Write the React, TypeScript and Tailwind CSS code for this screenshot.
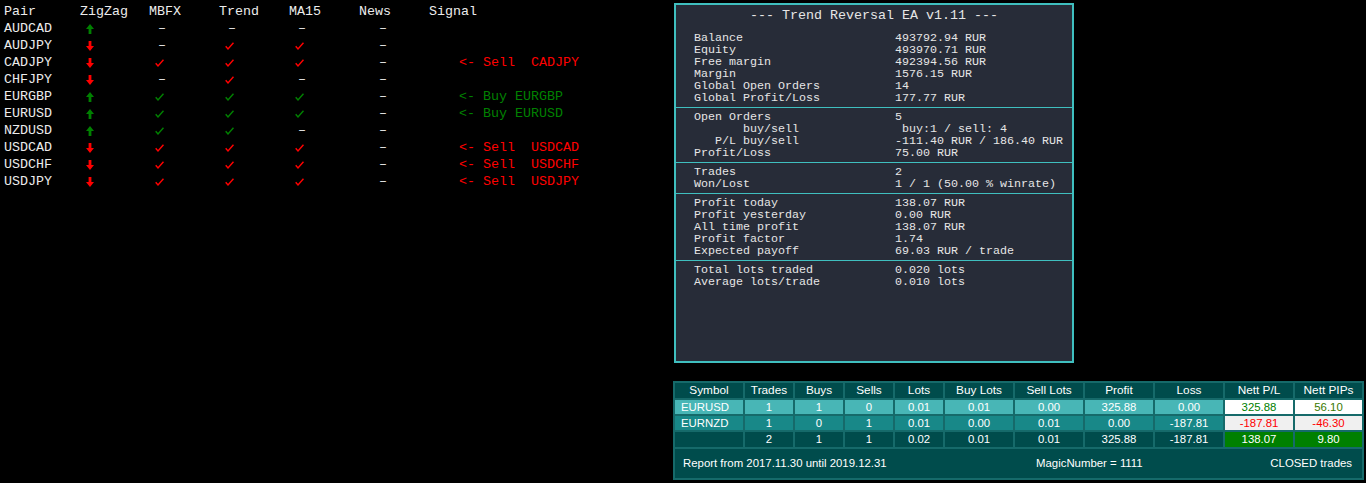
import React from "react";

type C = "u" | "d" | "-" | "r" | "g";

function Up() {
  return (
    <svg width="8" height="10" viewBox="0 0 8 10">
      <path d="M4 0 L8 5 L5.4 5 L5.4 10 L2.6 10 L2.6 5 L0 5 Z" fill="#008000" />
    </svg>
  );
}
function Down() {
  return (
    <svg width="8" height="10" viewBox="0 0 8 10">
      <path d="M4 10 L8 5 L5.4 5 L5.4 0 L2.6 0 L2.6 5 L0 5 Z" fill="#ff0000" />
    </svg>
  );
}
function Check({ c }: { c: string }) {
  return (
    <svg width="9" height="8" viewBox="0 0 9 8">
      <path d="M0.7 4.3 L3 6.9 L8.5 0.7" fill="none" stroke={c} strokeWidth="1.5" />
    </svg>
  );
}

function Cell({ v, w }: { v: C; w: string }) {
  if (v === "-")
    return <div className={`${w} pl-[9px] leading-[17px]`}>–</div>;
  return (
    <div className={`${w} pl-[6px] flex items-center`}>
      <Check c={v === "r" ? "#ff0000" : "#008000"} />
    </div>
  );
}

const rows: { p: string; z: "u" | "d"; m: C; t: C; a: C; s?: string; sc?: "r" | "g" }[] = [
  { p: "AUDCAD", z: "u", m: "-", t: "-", a: "-" },
  { p: "AUDJPY", z: "d", m: "-", t: "r", a: "r" },
  { p: "CADJPY", z: "d", m: "r", t: "r", a: "r", s: "<- Sell  CADJPY", sc: "r" },
  { p: "CHFJPY", z: "d", m: "-", t: "r", a: "-" },
  { p: "EURGBP", z: "u", m: "g", t: "g", a: "g", s: "<- Buy EURGBP", sc: "g" },
  { p: "EURUSD", z: "u", m: "g", t: "g", a: "g", s: "<- Buy EURUSD", sc: "g" },
  { p: "NZDUSD", z: "u", m: "g", t: "g", a: "-" },
  { p: "USDCAD", z: "d", m: "r", t: "r", a: "r", s: "<- Sell  USDCAD", sc: "r" },
  { p: "USDCHF", z: "d", m: "r", t: "r", a: "r", s: "<- Sell  USDCHF", sc: "r" },
  { p: "USDJPY", z: "d", m: "r", t: "r", a: "r", s: "<- Sell  USDJPY", sc: "r" },
];

const sections: [string, string][][] = [
  [
    ["Balance", "493792.94 RUR"],
    ["Equity", "493970.71 RUR"],
    ["Free margin", "492394.56 RUR"],
    ["Margin", "1576.15 RUR"],
    ["Global Open Orders", "14"],
    ["Global Profit/Loss", "177.77 RUR"],
  ],
  [
    ["Open Orders", "5"],
    ["       buy/sell", " buy:1 / sell: 4"],
    ["   P/L buy/sell", "-111.40 RUR / 186.40 RUR"],
    ["Profit/Loss", "75.00 RUR"],
  ],
  [
    ["Trades", "2"],
    ["Won/Lost", "1 / 1 (50.00 % winrate)"],
  ],
  [
    ["Profit today", "138.07 RUR"],
    ["Profit yesterday", "0.00 RUR"],
    ["All time profit", "138.07 RUR"],
    ["Profit factor", "1.74"],
    ["Expected payoff", "69.03 RUR / trade"],
  ],
  [
    ["Total lots traded", "0.020 lots"],
    ["Average lots/trade", "0.010 lots"],
  ],
];

const headers = ["Symbol", "Trades", "Buys", "Sells", "Lots", "Buy Lots", "Sell Lots", "Profit", "Loss", "Nett P/L", "Nett PIPs"];

export default function App() {
  return (
    <div className="w-[1366px] h-[483px] bg-black flex overflow-hidden">
      {/* left pair table */}
      <div className="w-[673px] shrink-0 pl-[4px] pt-[3px] font-['Liberation_Mono','Courier_New',monospace] text-[13.33px] text-[#ececec] whitespace-pre">
        <div className="flex h-[17px] leading-[17px]">
          <div className="w-[76px]">Pair</div>
          <div className="w-[69px]">ZigZag</div>
          <div className="w-[70px]">MBFX</div>
          <div className="w-[70px]">Trend</div>
          <div className="w-[70px]">MA15</div>
          <div className="w-[70px]">News</div>
          <div>Signal</div>
        </div>
        {rows.map((r) => (
          <div key={r.p} className="flex h-[17px] leading-[17px]">
            <div className="w-[76px]">{r.p}</div>
            <div className="w-[69px] pl-[6px] flex items-center">{r.z === "u" ? <Up /> : <Down />}</div>
            <Cell v={r.m} w="w-[70px]" />
            <Cell v={r.t} w="w-[70px]" />
            <Cell v={r.a} w="w-[70px]" />
            <div className="w-[70px] pl-[20px]">–</div>
            {r.s && (
              <div className={`pl-[30px] ${r.sc === "r" ? "text-[#ff0000]" : "text-[#008000]"}`}>{r.s}</div>
            )}
          </div>
        ))}
      </div>

      {/* right column */}
      <div className="flex flex-col">
        <div className="ml-[1px] mt-[3px] w-[400px] h-[360px] border-2 border-[#3fbfbf] bg-[#272c38] font-['Liberation_Mono','Courier_New',monospace] text-[#e6e6e6] whitespace-pre">
          <div className="pt-[3px] h-[19px] text-center text-[13.33px] leading-[16px]">--- Trend Reversal EA v1.11 ---</div>
          {sections.map((sec, i) => (
            <div
              key={i}
              className={`${i === 0 ? "pt-[8px]" : "pt-[3px] border-t border-[#3fbfbf]"} pb-[3px] pl-[18px] text-[11.67px] leading-[12px]`}
            >
              {sec.map(([a, b]) => (
                <div key={a} className="flex h-[12px]">
                  <div className="w-[201px]">{a}</div>
                  <div>{b}</div>
                </div>
              ))}
            </div>
          ))}
        </div>

        <div className="mt-[18px] w-[691px] p-[2px] bg-[#166a6a] font-['Liberation_Sans',Arial,sans-serif] text-[11.4px] text-white grid grid-cols-[68px_48px_48px_48px_48px_68px_68px_68px_68px_68px_67px] gap-[2px]">
          {headers.map((h) => (
            <div key={h} className="h-[15px] bg-[#004c4c] text-center leading-[15px] text-[11.8px]">
              {h}
            </div>
          ))}
          {/* row 1 */}
          <div className="h-[14px] bg-[#48b6b6] pl-[6px] leading-[14px]">EURUSD</div>
          {["1", "1", "0", "0.01", "0.01", "0.00", "325.88", "0.00"].map((v, i) => (
            <div key={i} className="h-[14px] bg-[#48b6b6] text-center leading-[14px]">{v}</div>
          ))}
          <div className="h-[14px] bg-white text-[#008000] text-center leading-[14px]">325.88</div>
          <div className="h-[14px] bg-white text-[#3a7a00] text-center leading-[14px]">56.10</div>
          {/* row 2 */}
          <div className="h-[14px] bg-[#188888] pl-[6px] leading-[14px]">EURNZD</div>
          {["1", "0", "1", "0.01", "0.00", "0.01", "0.00", "-187.81"].map((v, i) => (
            <div key={i} className="h-[14px] bg-[#188888] text-center leading-[14px]">{v}</div>
          ))}
          <div className="h-[14px] bg-[#f0f0f0] text-[#ff0000] text-center leading-[14px]">-187.81</div>
          <div className="h-[14px] bg-[#f0f0f0] text-[#ff0000] text-center leading-[14px]">-46.30</div>
          {/* row 3 */}
          <div className="h-[15px] bg-[#004c4c]"></div>
          {["2", "1", "1", "0.02", "0.01", "0.01", "325.88", "-187.81"].map((v, i) => (
            <div key={i} className="h-[15px] bg-[#004c4c] text-center leading-[15px]">{v}</div>
          ))}
          <div className="h-[15px] bg-[#008000] text-center leading-[15px]">138.07</div>
          <div className="h-[15px] bg-[#008000] text-center leading-[15px]">9.80</div>
          {/* footer */}
          <div className="col-span-11 h-[29px] bg-[#004c4c] flex items-center pl-[8px] pr-[10px]">
            <div className="w-[353px]">Report from 2017.11.30 until 2019.12.31</div>
            <div className="flex-1">MagicNumber = 1111</div>
            <div>CLOSED trades</div>
          </div>
        </div>
      </div>
    </div>
  );
}
